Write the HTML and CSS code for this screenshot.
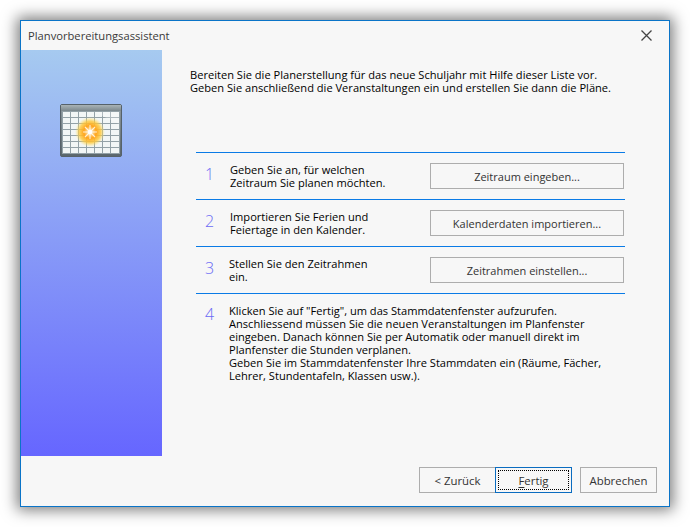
FILE: index.html
```html
<!DOCTYPE html>
<html lang="de">
<head>
<meta charset="utf-8">
<title>Planvorbereitungsassistent</title>
<link rel="stylesheet" href="styles.css">
</head>
<body>
<div class="window">
  <header class="titlebar">
    <span class="title">Planvorbereitungsassistent</span>
    <svg class="close" width="11" height="11" viewBox="0 0 11 11"><path d="M.5.5l10 10M10.5.5l-10 10" stroke="#444" stroke-width="1.3" fill="none"/></svg>
  </header>
  <div class="body">
    <aside class="side">
      <svg class="cal" width="62" height="53" viewBox="0 0 62 53">
        <defs>
          <linearGradient id="head" x1="0" y1="0" x2="0" y2="1"><stop offset="0" stop-color="#a9b3b6"/><stop offset="1" stop-color="#7b878c"/></linearGradient>
          <linearGradient id="frame" x1="0" y1="0" x2="0" y2="1"><stop offset="0" stop-color="#8e999e"/><stop offset="1" stop-color="#5a666c"/></linearGradient>
          <radialGradient id="glow"><stop offset="0" stop-color="#fff"/><stop offset=".14" stop-color="#ffe0a0"/><stop offset=".42" stop-color="#ffa51e"/><stop offset=".72" stop-color="#ffc93a" stop-opacity=".8"/><stop offset="1" stop-color="#ffe878" stop-opacity="0"/></radialGradient>
        </defs>
        <rect x=".5" y=".5" width="61" height="52" rx="1.5" fill="url(#frame)" stroke="#56626a"/>
        <rect x="1" y="1" width="60" height="6" fill="url(#head)"/>
        <rect x="2" y="7" width="58" height="43" fill="#93a1a7"/>
        <path fill="#f2f6f6" d="M3 8h7v5H3zM11 8h7v5h-7zM19 8h7v5h-7zM27 8h7v5h-7zM35 8h7v5h-7zM43 8h7v5h-7zM51 8h8v5h-8zM3 14h7v5H3zM11 14h7v5h-7zM19 14h7v5h-7zM27 14h7v5h-7zM35 14h7v5h-7zM43 14h7v5h-7zM51 14h8v5h-8zM3 20h7v5H3zM11 20h7v5h-7zM19 20h7v5h-7zM27 20h7v5h-7zM35 20h7v5h-7zM43 20h7v5h-7zM51 20h8v5h-8zM3 26h7v5H3zM11 26h7v5h-7zM19 26h7v5h-7zM27 26h7v5h-7zM35 26h7v5h-7zM43 26h7v5h-7zM51 26h8v5h-8zM3 32h7v5H3zM11 32h7v5h-7zM19 32h7v5h-7zM27 32h7v5h-7zM35 32h7v5h-7zM43 32h7v5h-7zM51 32h8v5h-8zM3 38h7v5H3zM11 38h7v5h-7zM19 38h7v5h-7zM27 38h7v5h-7zM35 38h7v5h-7zM43 38h7v5h-7zM51 38h8v5h-8zM3 44h7v5H3zM11 44h7v5h-7zM19 44h7v5h-7zM27 44h7v5h-7zM35 44h7v5h-7zM43 44h7v5h-7zM51 44h8v5h-8z"/>
        <path fill="#fff" opacity=".25" d="M34 8h25v12z"/>
        <circle cx="30" cy="28" r="15" fill="url(#glow)"/>
        <path d="M30 21v14M23 28h14M25 23l10 10M35 23L25 33" stroke="#fff" stroke-width="1.1" opacity=".8"/>
        <circle cx="30" cy="28" r="2.2" fill="#fff"/>
      </svg>
    </aside>
    <main class="content">
      <p class="intro">Bereiten Sie die Planerstellung für das neue Schuljahr mit Hilfe dieser Liste vor.<br>Geben Sie anschließend die Veranstaltungen ein und erstellen Sie dann die Pläne.</p>
      <section class="steps">
        <div class="step">
          <span class="num">1</span>
          <span class="label">Geben Sie an, für welchen<br>Zeitraum Sie planen möchten.</span>
          <button class="btn wide">Zeitraum eingeben...</button>
        </div>
        <div class="step">
          <span class="num">2</span>
          <span class="label">Importieren Sie Ferien und<br>Feiertage in den Kalender.</span>
          <button class="btn wide">Kalenderdaten importieren...</button>
        </div>
        <div class="step">
          <span class="num">3</span>
          <span class="label tight">Stellen Sie den Zeitrahmen<br>ein.</span>
          <button class="btn wide">Zeitrahmen einstellen...</button>
        </div>
        <div class="step last">
          <span class="num">4</span>
          <span class="label tight">Klicken Sie auf "Fertig", um das Stammdatenfenster aufzurufen.<br>Anschliessend müssen Sie die neuen Veranstaltungen im Planfenster<br>eingeben. Danach können Sie per Automatik oder manuell direkt im<br>Planfenster die Stunden verplanen.<br>Geben Sie im Stammdatenfenster Ihre Stammdaten ein (Räume, Fächer,<br>Lehrer, Stundentafeln, Klassen usw.).</span>
        </div>
      </section>
    </main>
  </div>
  <footer class="footer">
    <button class="btn nav">&lt; Zurück</button>
    <button class="btn nav default"><span class="focus"><u>F</u>ertig</span></button>
    <button class="btn nav cancel">Abbrechen</button>
  </footer>
</div>
</body>
</html>
```

FILE: styles.css
```css
* { box-sizing: border-box; }
html, body { margin: 0; height: 100%; background: #fff; }
body { padding: 20px; font: 11.1px/13px "Open Sans", "Noto Sans", sans-serif; color: #000; }
.window {
  width: 650px; height: 487px;
  display: flex; flex-direction: column;
  background: #f7f7f7;
  border: 1px solid #0a74c8;
  box-shadow: 0 0 14px 3px rgba(0,0,0,.52);
}
.titlebar { height: 29px; flex: none; display: flex; align-items: center; justify-content: space-between; padding: 0 17px 0 7px; }
.title { color: #3a3a3a; font-size: 11.2px; }
.close { display: block; }
.body { display: flex; height: 406px; flex: none; }
.side { width: 141px; flex: none; background: linear-gradient(#a6caf0, #6666ff); padding: 54px 0 0 39px; }
.cal { display: block; }
.content { flex: 1; padding: 18px 45px 0 28px; }
.intro { margin: 0 0 58px; white-space: nowrap; }
.steps { margin-left: 6px; border-top: 1px solid #0a7be6; }
.step { height: 47px; display: flex; align-items: center; border-bottom: 1px solid #0a7be6; }
.step.last { border-bottom: 0; align-items: flex-start; padding-top: 10px; height: auto; }
.num { width: 34px; font-size: 16px; font-weight: 300; padding: 0 0 3px 9px; color: #6a6af5; flex: none; }
.last .num { padding: 4px 0 0 9px; }
.label { width: 200px; flex: none; white-space: nowrap; }
.label.tight { margin-left: -1px; margin-right: 1px; }
.last .label { width: 395px; }
.btn { font: inherit; font-size: 11px; color: #333; background: #f7f7f7; border: 1px solid #adadad; padding: 0; height: 26px; }
.wide { width: 194px; }
.footer { flex: 1; display: flex; justify-content: flex-end; align-items: flex-start; padding: 11px 12px 0 0; }
.nav { width: 77px; font-size: 11.4px; }
.nav.default { border-color: #0a6cc0; margin-left: -1px; padding: 2px; }
.nav.cancel { margin-left: 8px; }
.focus { display: flex; height: 100%; align-items: center; justify-content: center; border: 1px dotted #000; }
.focus u { text-underline-offset: 2px; }
```
